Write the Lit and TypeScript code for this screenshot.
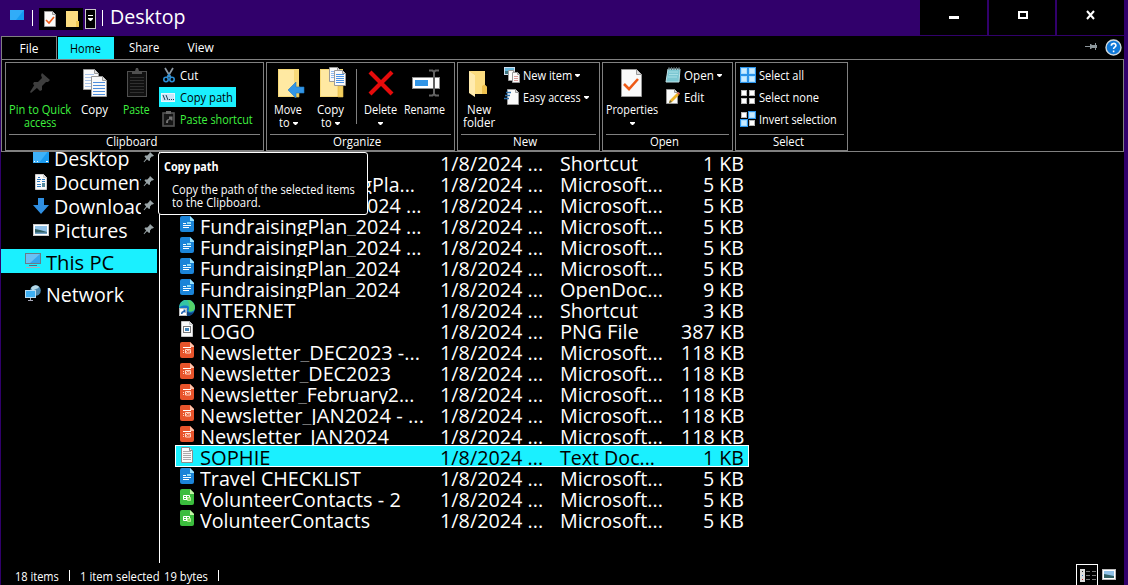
import { LitElement, html, svg, css, nothing } from "lit";
import { customElement, property } from "lit/decorators.js";

/** A run of text condensed or widened so that it occupies a given width. */
@customElement("fit-text")
class FitText extends LitElement {
  @property() text = "";
  @property({ type: Number }) w = 0;
  static styles = css`
    :host { display: inline-block; white-space: pre; flex: none; text-align: left; vertical-align: top; }
    .run { display: inline-block; white-space: pre; transform-origin: 0 50%; }
    .low { position: relative; top: -1px; opacity: .45; }
  `;
  render() {
    const parts = this.text.split("_");
    return html`<span class="run">${parts.map((p, i) => (i ? html`<span class="low">_</span>${p}` : p))}</span>`;
  }
  updated() {
    const el = this.renderRoot.querySelector(".run") as HTMLElement;
    this.style.width = `${this.w}px`;
    el.style.transform = `scaleX(${(this.w / el.offsetWidth).toFixed(4)})`;
  }
}

const t = (text: string, w: number) => html`<fit-text .text=${text} .w=${w}></fit-text>`;

const icon = (x: number, y: number, w: number, h: number, body: unknown) =>
  html`<svg class="ico" width=${w} height=${h} viewBox="${x} ${y} ${w} ${h}">${body}</svg>`;

const arrow = html`<svg class="arrow" width="5" height="3" viewBox="0 0 5 3"><path d="M0 0h5v1L3 3H2L0 1z" fill="#fff"/></svg>`;

const page = (x: number, y: number, w: number, h: number, f = 4, edge = "#9a9a9a") => svg`
  <path d="M${x + 0.5} ${y + 0.5}h${w - f - 1}l${f} ${f}v${h - f - 1}h${-(w - 1)}z" fill="#fafafa" stroke=${edge}/>
  <path d="M${x + w - f - 0.5} ${y + 0.5}v${f}h${f}" fill="#ddd" stroke=${edge}/>`;

const lines = (x: number, y: number, w: number, n: number, step: number, c: string) =>
  Array.from({ length: n }, (_, i) => svg`<rect x=${x} y=${y + i * step} width=${w} height="1" fill=${c}/>`);

const pin = icon(22, 64, 36, 39, svg`
  <g fill="#3e3e3e"><path d="M42 73l8 7-2 2-2 0-4 4v4l-2 1-7-7 1-2h4l4-4-1-3z"/><path d="M35 84l3 3-7 6-1-1z"/></g>`);
const copy = icon(76, 64, 36, 39, svg`
  ${page(83, 69, 16, 21)}${lines(85, 74, 9, 5, 3, "#a9c3e8")}
  ${page(91, 76, 16, 21)}${lines(93, 82, 12, 5, 3, "#4f8edc")}`);
const paste = icon(118, 64, 36, 39, svg`
  <rect x="127.500" y="71.500" width="19" height="25" fill="#111" stroke="#505050"/>
  ${lines(130, 77, 14, 6, 3, "#303030")}
  <path d="M132 74v-3h3l1-3h2l1 3h3v3z" fill="#505050"/>`);
const folder = (x: number, y: number, w: number, h: number) => svg`
  <rect x=${x} y=${y} width=${w} height=${h} fill="#f7d978"/>
  <rect x=${x + 1} y=${y + 1} width=${w - 6} height=${h - 2} fill="#ffe9a2"/>
  <path d="M${x + w - 5} ${y + h - 11}h5v11h-5z" fill="#f3cf5f" stroke="#e0b947" stroke-width=".6"/>`;
const moveTo = icon(270, 64, 36, 39, svg`
  ${folder(278, 69, 21, 28)}
  <path d="M288 90l8-8v5h8v6h-8v5z" fill="#3295e6" stroke="#1d78c4" stroke-width=".6"/>`);
const copyTo = icon(312, 64, 36, 39, svg`
  ${folder(320, 69, 23, 28)}
  ${page(329, 67, 12, 15, 3)}${lines(331, 71, 7, 4, 2, "#8fb9ef")}
  ${page(334, 70, 12, 16, 3)}${lines(336, 74, 8, 5, 2, "#4c93e6")}`);
const del = icon(362, 64, 36, 39, svg`
  <path d="M370 72l22 22M392 72l-22 22" stroke="#e60b0b" stroke-width="4.200"/>`);
const rename = icon(406, 64, 36, 39, svg`
  <rect x="411.500" y="77.500" width="27" height="11" fill="#fff" stroke="#8d8d8d"/>
  <rect x="414" y="80" width="13" height="6" fill="#3295e6"/>
  <path d="M428 70.500h3.500l1.500 1.500 1.500-1.500h3.500M433 72v22M428 95.500h3.500l1.500-1.500 1.500 1.500h3.500" fill="none" stroke="#636363" stroke-width="2"/>`);
const newFolder = icon(461, 64, 36, 39, svg`
  <path d="M469 71h16v14l2 2v7h-14z" fill="#f7d368"/>
  <path d="M485 85l2 2v7h-5v-9z" fill="#eec14e"/>
  <path d="M469 71l6 4v22l-6-4z" fill="#ffebae"/>
  <path d="M475 71h10v13l-3 2v8h-7V75l-5-4z" fill="#fbdc80"/>`);
const props = icon(614, 64, 36, 39, svg`
  ${page(621, 69, 21, 28, 5)}<path d="M624 84l5 5 9-10" fill="none" stroke="#ee5a16" stroke-width="2.600"/>`);

const cut = icon(161, 67, 16, 16, svg`
  <path d="M165 68l6 10M173 68l-6 10" stroke="#8d9aa5" stroke-width="1.700"/>
  <circle cx="166" cy="79.500" r="2.200" fill="none" stroke="#2b8fd6" stroke-width="1.600"/>
  <circle cx="172" cy="79.500" r="2.200" fill="none" stroke="#2b8fd6" stroke-width="1.600"/>
  <path d="M169 74l-2 4M169 74l2 4" stroke="#2b8fd6" stroke-width="1.600"/>`);
const copyPath = icon(161, 89, 16, 16, svg`
  <rect x="161.500" y="93.500" width="13" height="8" fill="#c8e4f7" stroke="#e8f5fc"/>
  <path d="M163 95l2 5M166 95l2 5" stroke="#1c3d52"/><path d="M169 99.500h1M171 99.500h1M173 99.500h1" stroke="#1c3d52"/>`);
const pasteShortcut = icon(161, 111, 16, 16, svg`
  <rect x="163" y="113" width="11" height="13" fill="#151515" stroke="#555" stroke-width="1.600"/>
  <rect x="166" y="111" width="5" height="3" fill="#666"/>
  <path d="M166 123c0-3 1-4 3-4v-2.500h3.500v4h-1l-1-1c-2 0-2.500 1-2.500 3.500z" fill="#737373"/>`);
const newItem = icon(504, 67, 16, 16, svg`
  <rect x="504.500" y="67.500" width="10" height="7" fill="#67b8dc" stroke="#cde"/>
  <rect x="505" y="71" width="9" height="3" fill="#3c7580"/>
  ${page(508, 70, 8, 11, 2)}${page(512, 72, 8, 11, 2)}${lines(514, 76, 4, 3, 2, "#d89a9a")}`);
const easy = icon(504, 89, 16, 16, svg`
  ${page(507, 89, 12, 16, 3)}
  <path d="M506 92.500h5M505 95.500h5M504 98.500h5" stroke="#2b6ea8" stroke-width="1.400"/>`);
const openIco = icon(665, 67, 16, 16, svg`
  <path d="M668 69h12l-1 13h-13z" fill="#7cc7d2" stroke="#bfe3e8"/>
  <path d="M669 72h9M669 74.500h9M668 77h9" stroke="#a8dfe6"/>
  <path d="M669 67v3M671.500 67v3M674 67v3M676.500 67v3M679 67v3" stroke="#5c6c70"/>`);
const editIco = icon(665, 89, 16, 16, svg`
  ${page(666, 89, 12, 15, 3)}
  <path d="M669 103l1-3 7-7 2 2-7 7z" fill="#f0b428"/><path d="M677 93l1.500-1 1.500 1.500-1 1.500z" fill="#e0695f"/><path d="M669 103l1-3 2 2z" fill="#664"/>`);
const cell = (x: number, y: number, on: boolean) => on
  ? svg`<rect x=${x + 0.5} y=${y + 0.5} width="7" height="7" fill="#a8dcff" stroke="#2a93ea"/><rect x=${x + 2} y=${y + 2} width="4" height="4" fill="#c8eaff"/>`
  : svg`<rect x=${x + 1.5} y=${y + 1.5} width="5" height="5" fill="#fff" stroke="#b5b5b5"/>`;
const sel = (y: number, m: boolean[]) => icon(740, y, 16, 16, svg`
  ${cell(740, y, m[0])}${cell(748, y, m[1])}${cell(740, y + 8, m[2])}${cell(748, y + 8, m[3])}`);

const doc = (fill: string, fold: string, art: unknown) => html`
  <svg class="fico" width="14" height="16" viewBox="0 0 14 16">
    <path d="M2 0h8l4 4v10a2 2 0 0 1-2 2H2a2 2 0 0 1-2-2V2a2 2 0 0 1 2-2z" fill=${fill}/>
    <path d="M10 0l4 4v1h-4z" fill=${fold}/>${art}</svg>`;
const fileIcons: Record<string, () => unknown> = {
  none: () => html`<span class="fico blank"></span>`,
  doc: () => doc("#1b84d8", "#9be4ff", svg`<path d="M3 7.500h3M3 9.500h8M3 11.500h6" stroke="#fff"/><rect x="7" y="6" width="4" height="2" fill="#8fdcf8"/>`),
  ppt: () => doc("#e8542b", "#ffc3ab", svg`<path d="M3 5.500h8" stroke="#fff"/><path d="M5.500 7.500h5v3.500h-5zM3 8.500h1M3 10.500h1" fill="none" stroke="#ffd9c8"/><path d="M6 10l2-2 1 1.500 1.500-1.500" fill="none" stroke="#ffb79d"/>`),
  xls: () => doc("#3bbd3d", "#c4f7a5", svg`<path d="M3.500 6.500h6v4h-6zM3.500 8.500h6M6.500 6.500v4" fill="none" stroke="#fff"/><path d="M7.500 8.500h3v3h-3z" fill="#8ad764" stroke="#c4f7a5" stroke-width=".8"/>`),
  txt: () => html`<svg class="fico" width="14" height="16" viewBox="0 0 14 16">${page(1, 0, 12, 16, 3, "#8c8c8c")}${lines(3, 4, 8, 5, 2, "#aaa")}</svg>`,
  img: () => html`<svg class="fico" width="14" height="16" viewBox="0 0 14 16">${page(1, 0, 12, 16, 3, "#c4c4c4")}<rect x="3.500" y="5.500" width="7" height="6" fill="#fff" stroke="#777"/><rect x="5" y="7" width="4" height="3" fill="#3f83b8"/></svg>`,
  edge: () => html`<svg class="fico edge" width="16" height="16" viewBox="0 0 16 16">
    <circle cx="8" cy="8" r="8" fill="#1477c9"/><path d="M0 8a8 8 0 0 1 16-1c0 3-2 4.500-4.500 4.500-2 0-2-1-1.500-2 .6-2-.5-4-3-4C4 5.500 1 6 0 8z" fill="#34c4a4"/>
    <path d="M8 0a8 8 0 0 1 8 7c0 3-2 4.500-4.500 4.500-2 0-2-1-1.500-2 .5-3 1-6-2-9.500z" fill="#55d268"/><path d="M6 9c1 3 5 5 9 3-1 3-5 4-8 4z" fill="#0c3f7d"/>
    <rect x="0.500" y="8.500" width="7" height="7" fill="#fff" stroke="#bbb"/><path d="M2 14c0-2 1-3 2.500-3V9.500H6.500V13l-1-.8C4 12.200 3.500 13 3.500 14z" fill="#1d5fae"/></svg>`,
};

const F = "FundraisingPlan_2024";
const MS: [string, number] = ["Microsoft...", 103];
type Row = [string, string, number, [string, number], string];
const rows: Row[] = [
  ["none", "", 0, ["Shortcut", 78], "1 KB"],
  ["none", "FundraisingPla...", 150, MS, "5 KB"],
  ["none", F + " ...", 222, MS, "5 KB"],
  ["doc", F + " ...", 222, MS, "5 KB"],
  ["doc", F + " ...", 222, MS, "5 KB"],
  ["doc", F, 200, MS, "5 KB"],
  ["doc", F, 200, ["OpenDoc...", 103], "9 KB"],
  ["edge", "INTERNET", 95, ["Shortcut", 78], "3 KB"],
  ["img", "LOGO", 55, ["PNG File", 79], "387 KB"],
  ["ppt", "Newsletter_DEC2023 -...", 220, MS, "118 KB"],
  ["ppt", "Newsletter_DEC2023", 191, MS, "118 KB"],
  ["ppt", "Newsletter_February2...", 214, MS, "118 KB"],
  ["ppt", "Newsletter_JAN2024 - ...", 224, MS, "118 KB"],
  ["ppt", "Newsletter_JAN2024", 189, MS, "118 KB"],
  ["txt", "SOPHIE", 71, ["Text Doc...", 95], "1 KB"],
  ["doc", "Travel CHECKLIST", 161, MS, "5 KB"],
  ["xls", "VolunteerContacts - 2", 201, MS, "5 KB"],
  ["xls", "VolunteerContacts", 170, MS, "5 KB"],
];

const navPin = html`<svg class="npin" width="12" height="12" viewBox="0 0 12 12"><path d="M7 1l4 3.800-1.500.8-.8-.2L7 7.500v2l-1 .5L4 8.300 1.200 11.300.6 10.700 3.200 7.500 1.500 5.500l.6-.9H4.300l2-2z" fill="#9aa5a8"/></svg>`;
const navIcons = {
  desktop: svg`<rect x="0" y="0" width="16" height="13" fill="#1b9bf0"/><path d="M0 0h16L6 13H0z" fill="#3fb2fa"/><path d="M1 11.500h1M4 11.500h1M13 11.500h2" stroke="#fff"/>`,
  documents: svg`${page(2, 0, 12, 16, 3, "#ccc")}<path d="M4 5.500h4M5 3.500h2M4 7.500h3M9 5.500h3M9 7.500h3M4 10.500h4M4 12.500h4" stroke="#2f7dc2"/><rect x="9" y="9" width="3" height="4" fill="#568a9c"/>`,
  downloads: svg`<path d="M5 0h6v7h5l-8 9-8-9h5z" fill="#2f8fe2"/>`,
  pictures: svg`<rect x=".5" y="2.500" width="15" height="11" fill="#fff" stroke="#c8c8c8"/><rect x="2" y="4" width="12" height="8" fill="#8fc1e8"/><path d="M2 7l5 1 7 2v2H2z" fill="#2f5f63"/><path d="M2 10.500h12V12H2z" fill="#6f9fc4"/>`,
};

@customElement("app-root")
class AppRoot extends LitElement {
  static styles = css`
    :host { display: block; width: 1128px; height: 585px; overflow: hidden; background: #31006b; color: #fff;
      font: 12px/13px "Open Sans", "Noto Sans", sans-serif; }
    * { box-sizing: border-box; }
    svg { display: block; flex: none; }
    .win { display: flex; flex-direction: column; height: 585px; padding: 0 4px 0 1px; }
    .title { display: flex; height: 36px; flex: none; }
    .sys { display: flex; flex: 1; align-items: flex-start; padding-left: 9px; }
    .bar { width: 1px; height: 16px; background: #fff; margin-top: 10px; }
    .qat { display: flex; margin: 8px 5px 0 6px; background: #000; height: 22px; width: 58px; }
    .caption { font-size: 19.600px; line-height: 24px; margin: 5px 0 0 7px; }
    .ctl { display: flex; gap: 2px; height: 35px; background: #31006b; }
    .ctl svg { background: #000; }
    .tabs { display: flex; background: #000; height: 23px; flex: none; align-items: stretch; }
    .tab { display: flex; align-items: center; justify-content: center; width: 60px; }
    .file { border: 1px solid #808080; border-bottom: 0; width: 56px; }
    .home { background: #1af0ff; color: #000; width: 56px; margin: 1px 0 0 1px; padding-right: 1px; }
    .view { width: 53px; }
    .tools { display: flex; margin-left: auto; align-items: center; gap: 7px; padding-right: 2px; }
    .tools svg:first-child { margin-top: -2px; }
    .ribbon { background: #000; height: 93px; flex: none; border: 1px solid #808080; padding: 2px 0 0 3px; display: flex; gap: 2px; }
    .group { height: 89px; border: 1px solid #808080; display: flex; flex-direction: column; }
    .body { display: flex; height: 71px; flex: none; }
    .cap { border-top: 1px solid #808080; margin: 0 3px; padding-right: 7px; text-align: center; line-height: 14px; height: 16px; }
    .big { display: flex; flex-direction: column; align-items: center; flex: none; padding-top: 1px; }
    .line { display: flex; align-items: center; height: 13px; gap: 3px; }
    .line .arrow { margin-top: 1px; }
    .green { color: #3ff23f; }
    .col { display: flex; flex-direction: column; padding-top: 1px; align-items: flex-start; }
    .small { display: flex; align-items: center; height: 22px; padding: 0 3px 0 2px; gap: 3px; }
    .hot { background: #1af0ff; color: #000; height: 20px; margin: 1px 0; }
    .vsep { width: 1px; height: 55px; background: #808080; margin: 6px 0 0 5px; }
    .main { flex: 1; background: #000; display: flex; flex-direction: column; min-height: 0; }
    .split { display: flex; height: 411px; overflow: hidden; font-size: 19.600px; }
    .nav { width: 159px; border-right: 1px solid #fff; flex: none; overflow: hidden; }
    .item { display: flex; align-items: center; height: 24px; line-height: 24px; padding-left: 32px; }
    .item .lab { margin-left: 5px; width: 87px; overflow: hidden; white-space: nowrap; height: 24px; padding-top: 1px; }
    .npin { margin: -2px 0 0 2px; }
    .first { margin-top: -6px; }
    .pc { background: #1af0ff; color: #000; width: 156px; margin-top: 7px; padding-left: 24px; }
    .net { margin-top: 9px; padding-left: 24px; }
    .pc svg, .net svg { margin-top: -2px; }
    .wide { width: auto; height: 24px; padding: 1px 0 0 5px; }
    .pc .wide { padding-top: 2px; }
    .list { margin-left: 15px; width: 574px; }
    .row { display: flex; height: 21px; line-height: 24px; overflow: hidden; padding-left: 5px; }
    .row.on { background: #1af0ff; color: #000; outline: 1px solid #fff; outline-offset: -1px; height: 22px; margin-top: -1px; padding-top: 1px; }
    .fico { margin-top: 1px; width: 14px; height: 16px; flex: none; }
    .fico.edge { width: 16px; margin-left: -1px; margin-right: -1px; }
    .name { width: 240px; margin-left: 6px; flex: none; white-space: nowrap; }
    .shift { padding-left: 65px; }
    .date { width: 120px; flex: none; }
    .type { width: 109px; flex: none; }
    .size { flex: 1; text-align: right; padding-right: 5px; white-space: nowrap; }
    .status { height: 22px; display: flex; align-items: flex-start; padding: 7px 0 0 14px; line-height: 13px; }
    .status .tick { width: 1px; height: 11px; background: #fff; margin: 0 10px; }
    .views { margin-left: auto; margin-top: -7px; display: flex; }
    .tip { position: absolute; left: 158px; top: 152px; width: 210px; height: 63px; border: 1px solid #fff; border-radius: 3px; background: #000; padding: 7px 0 0 5px; }
    .tip .b { font-weight: 700; }
    .tip .p { padding: 10px 0 0 8px; }
  `;

  big(w: number, ic: unknown, a: unknown, b: unknown = nothing, cls = "", ml = 0) {
    return html`<div class="big ${cls}" style="width:${w}px;margin-left:${ml}px">${ic}<div class="line">${a}</div><div class="line">${b}</div></div>`;
  }
  small(ic: unknown, text: string, w: number, cls = "", drop = false) {
    return html`<div class="small ${cls}">${ic}${t(text, w)}${drop ? arrow : nothing}</div>`;
  }
  group(w: number, cap: unknown, body: unknown) {
    return html`<section class="group" style="width:${w}px"><div class="body">${body}</div><div class="cap">${cap}</div></section>`;
  }
  navItem(k: keyof typeof navIcons, text: string, w: number, cls = "") {
    return html`<div class="item ${cls}"><svg width="16" height="16" viewBox="0 0 16 16">${navIcons[k]}</svg><div class="lab">${t(text, w)}</div>${navPin}</div>`;
  }
  row([ic, name, w, type, size]: Row, i: number) {
    return html`<div class="row ${i === 14 ? "on" : ""}">${fileIcons[ic]()}
      <div class="name ${i === 1 ? "shift" : ""}">${name ? t(name, w) : nothing}</div>
      <div class="date">${t("1/8/2024 ...", 103)}</div><div class="type">${t(type[0], type[1])}</div>
      <div class="size">${t(size, size.length > 4 ? 63 : 41)}</div></div>`;
  }

  render() {
    return html`<div class="win">
      <header class="title">
        <div class="sys">
          <svg width="14" height="20" viewBox="10 0 14 20"><rect x="10" y="10" width="14" height="10" fill="#159bf2"/><path d="M10 10h14l-8 10h-6z" fill="#31acf8"/></svg>
          <div class="bar" style="margin-left:8px"></div>
          <div class="qat">
            <svg width="58" height="22" viewBox="39 8 58 22">
              ${page(44, 11, 12, 16, 3)}<path d="M46 20l3 3 5-6" fill="none" stroke="#ee5a16" stroke-width="1.600"/>
              <path d="M66 11h12v10h1v6H66z" fill="#fbdc80"/><path d="M76 21h3v6h-3z" fill="#efc855"/>
              <rect x="83" y="8" width="14" height="22" fill="#31006b"/><rect x="85.500" y="9.500" width="10" height="19" fill="#000" stroke="#c8c8c8"/>
              <path d="M88 15.500h5" stroke="#fff"/><path d="M88 18h5v1l-2 2h-1l-2-2z" fill="#fff"/></svg>
          </div>
          <div class="bar"></div>
          <div class="caption">${t("Desktop", 76)}</div>
        </div>
        <div class="ctl">
          <svg width="67" height="35" viewBox="920 0 67 35"><rect x="949" y="16" width="10" height="3" fill="#fff"/></svg>
          <svg width="66" height="35" viewBox="989 0 66 35"><path d="M1018 11h10v8h-10zM1020 13v4h6v-4z" fill="#fff" fill-rule="evenodd"/></svg>
          <svg width="67" height="35" viewBox="1057 0 67 35"><path d="M1087 11l7 8M1094 11l-7 8" stroke="#fff" stroke-width="2"/></svg>
        </div>
      </header>
      <nav class="tabs">
        <div class="tab file">${t("File", 19)}</div><div class="tab home">${t("Home", 31)}</div>
        <div class="tab">${t("Share", 30)}</div><div class="tab view">${t("View", 26)}</div>
        <div class="tools">
          <svg width="13" height="9" viewBox="0 0 13 9"><path d="M0 4h5V2h1l1 1h3V1h1v2h1v3h-1v2h-1V6H7L6 7H5V5H0z" fill="#8c969b"/></svg>
          <svg width="17" height="17" viewBox="0 0 17 17"><circle cx="8.500" cy="8.500" r="7.500" fill="#0f78d8" stroke="#cfd8de" stroke-width="1.400"/><path d="M6.300 6.700c0-3 4.600-3 4.600-.2 0 1.700-2.300 1.700-2.300 3.500M8.600 11.500v1.700" fill="none" stroke="#fff" stroke-width="1.600"/></svg>
        </div>
      </nav>
      <div class="ribbon">
        ${this.group(259, t("Clipboard", 51), html`
          ${this.big(64, pin, t("Pin to Quick", 62), t("access", 32), "green", 2)}
          ${this.big(44, copy, t("Copy", 27))}
          ${this.big(40, paste, t("Paste", 27), nothing, "green")}
          <div class="col" style="margin-left:3px">
            ${this.small(cut, "Cut", 18)}${this.small(copyPath, "Copy path", 53, "hot")}${this.small(pasteShortcut, "Paste shortcut", 73, "green")}
          </div>`)}
        ${this.group(189, t("Organize", 48), html`
          ${this.big(42, moveTo, t("Move", 28), html`${t("to", 11)}${arrow}`)}
          ${this.big(42, copyTo, t("Copy", 27), html`${t("to", 11)}${arrow}`)}
          <div class="vsep"></div>
          ${this.big(46, del, t("Delete", 33), arrow)}
          ${this.big(43, rename, t("Rename", 41))}`)}
        ${this.group(143, t("New", 24), html`
          ${this.big(42, newFolder, t("New", 24), t("folder", 32))}
          <div class="col" style="margin-left:2px">${this.small(newItem, "New item", 49, "", true)}${this.small(easy, "Easy access", 58, "", true)}</div>`)}
        ${this.group(131, t("Open", 29), html`
          ${this.big(58, props, t("Properties", 52), arrow)}
          <div class="col" style="margin-left:2px">${this.small(openIco, "Open", 30, "", true)}${this.small(editIco, "Edit", 20)}</div>`)}
        ${this.group(113, t("Select", 31), html`
          <div class="col" style="margin-left:2px">
            ${this.small(sel(67, [true, true, true, true]), "Select all", 45)}
            ${this.small(sel(89, [false, false, false, false]), "Select none", 60)}
            ${this.small(sel(111, [false, true, true, false]), "Invert selection", 78)}</div>`)}
      </div>
      <div class="main">
        <div class="split">
          <aside class="nav">
            ${this.navItem("desktop", "Desktop", 76, "first")}
            ${this.navItem("documents", "Documents", 102)}
            ${this.navItem("downloads", "Downloads", 102)}
            ${this.navItem("pictures", "Pictures", 73)}
            <div class="item pc"><svg width="16" height="16" viewBox="0 0 16 16"><rect x=".5" y="1.500" width="15" height="10" fill="#35a7ee" stroke="#667d88"/><path d="M1 2h14L5 11H1z" fill="#68c1f5"/><path d="M4 13.500h8" stroke="#667"/><path d="M1 15.500h14" stroke="#aab"/></svg><div class="wide">${t("This PC", 68)}</div></div>
            <div class="item net"><svg width="16" height="16" viewBox="0 0 16 16"><circle cx="10.500" cy="5.500" r="5.300" fill="#4a87ad"/><path d="M6 3c3-4 7-3 8-1-2 3-5 1-6 5z" fill="#b6d9e8"/><rect x=".5" y="5.500" width="10" height="7" fill="#3eaff2" stroke="#b9dcf0"/><path d="M3 15.500h5M5.500 13v2" stroke="#aab"/></svg><div class="wide">${t("Network", 78)}</div></div>
          </aside>
          <div class="list">${rows.map((r, i) => this.row(r, i))}</div>
        </div>
        <footer class="status">
          ${t("18 items", 44)}<i class="tick"></i>${t("1 item selected", 80)}<span style="width:4px"></span>${t("19 bytes", 44)}<i class="tick"></i>
          <div class="views">
            <svg width="48" height="22" viewBox="1076 563 48 22">
              <rect x="1076.500" y="564.500" width="21" height="24" fill="#000" stroke="#fff"/>
              <path d="M1080 569h5v13h-5z" fill="#ddd"/><path d="M1082 571.500h1" stroke="#222"/><path d="M1082 575.500h1" stroke="#2a72c8"/><path d="M1082 579.500h1" stroke="#c22"/>
              <path d="M1086 571.500h4M1092 571.500h4M1086 575.500h4M1092 575.500h4M1086 579.500h4M1092 579.500h4" stroke="#777"/>
              <rect x="1102.500" y="569.500" width="13" height="10" fill="#fff" stroke="#bbb"/><rect x="1104" y="571" width="10" height="7" fill="#8fc1e8"/><path d="M1104 574l5 1 5 1v2h-10z" fill="#2f5f63"/>
            </svg>
          </div>
        </footer>
      </div>
      <div class="tip"><div class="b">${t("Copy path", 55)}</div><div class="p">${t("Copy the path of the selected items", 183)}<br>${t("to the Clipboard.", 89)}</div></div>
    </div>`;
  }
}
